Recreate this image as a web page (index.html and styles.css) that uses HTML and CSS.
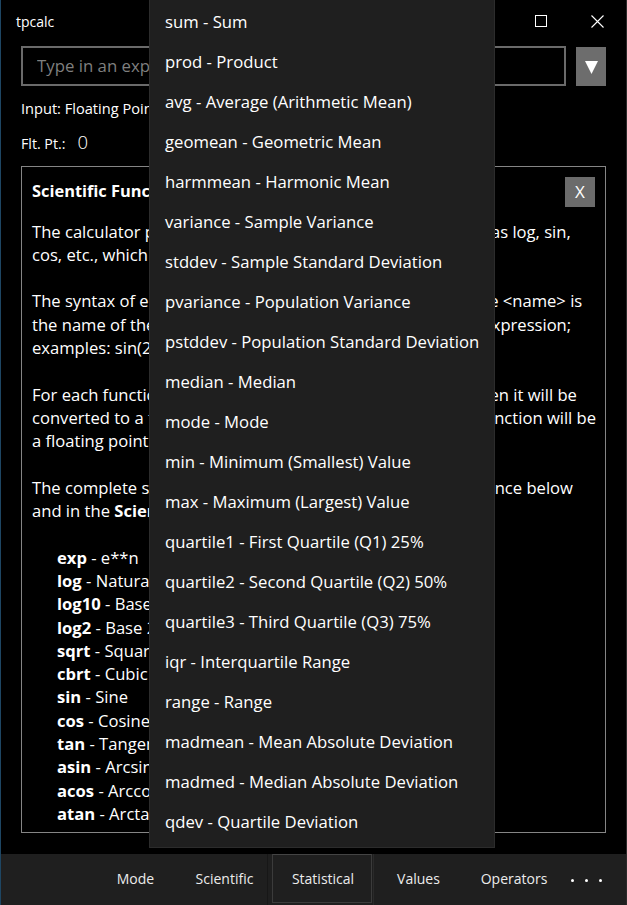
FILE: index.html
```html
<!DOCTYPE html>
<html lang="en">
<head>
<meta charset="utf-8">
<title>tpcalc</title>
<link rel="stylesheet" href="styles.css">
</head>
<body>
<div class="window">
  <header class="titlebar">
    <span class="app-title">tpcalc</span>
    <div class="caption">
      <button class="cap-btn" aria-label="Minimize">
        <svg width="11" height="11" viewBox="0 0 11 11"><line x1="0" y1="5.5" x2="11" y2="5.5" stroke="#fff" stroke-width="1"/></svg>
      </button>
      <button class="cap-btn" aria-label="Maximize">
        <svg width="12" height="12" viewBox="0 0 12 12"><rect x="0.5" y="0.5" width="11" height="11" fill="none" stroke="#fff" stroke-width="1"/></svg>
      </button>
      <button class="cap-btn" aria-label="Close">
        <svg width="13" height="13" viewBox="0 0 13 13"><path d="M0.5 0.5 L12.5 12.5 M12.5 0.5 L0.5 12.5" stroke="#fff" stroke-width="1.1" fill="none"/></svg>
      </button>
    </div>
  </header>

  <main class="main">
    <div class="input-row">
      <input class="expr" type="text" placeholder="Type in an expression">
      <button class="drop-btn" aria-label="Show functions">
        <svg width="13" height="13" viewBox="0 0 13 13"><polygon points="0,0 13,0 6.5,13" fill="#fff"/></svg>
      </button>
    </div>

    <div class="mode-line">Input: Floating Point</div>
    <div class="result-row">
      <span class="result-label">Flt. Pt.:</span>
      <span class="result-value">0</span>
    </div>

    <section class="help">
      <button class="help-close">X</button>
      <h2 class="help-title">Scientific Functions</h2>
      <p>The calculator provides a range of scientific functions, such as log, sin,<br>cos, etc., which can be used in expressions.</p>
      <p>The syntax of each function is &lt;name&gt;(&lt;expression&gt;), where &lt;name&gt; is<br>the name of the function and &lt;expression&gt; is any allowed expression;<br>examples: sin(2*pi), log(10), sqrt(2).</p>
      <p>For each function, if the argument supplied is an integer, then it will be<br>converted to a floating point number; the output of every function will be<br>a floating point number.</p>
      <p>The complete set of scientific functions is listed in the reference below<br>and in the <b>Scientific</b> menu.</p>
      <ul class="fn-list">
        <li><b>exp</b> - e**n</li>
        <li><b>log</b> - Natural Logarithm</li>
        <li><b>log10</b> - Base 10 Logarithm</li>
        <li><b>log2</b> - Base 2 Logarithm</li>
        <li><b>sqrt</b> - Square Root</li>
        <li><b>cbrt</b> - Cubic Root</li>
        <li><b>sin</b> - Sine</li>
        <li><b>cos</b> - Cosine</li>
        <li><b>tan</b> - Tangent</li>
        <li><b>asin</b> - Arcsine</li>
        <li><b>acos</b> - Arccosine</li>
        <li><b>atan</b> - Arctangent</li>
      </ul>
    </section>
  </main>

  <nav class="cmdbar">
    <button class="cmd cmd-mode">Mode</button>
    <button class="cmd cmd-sci">Scientific</button>
    <div class="cmd-cell">
      <button class="cmd cmd-stat">Statistical</button>
    </div>
    <button class="cmd cmd-val">Values</button>
    <button class="cmd cmd-ops">Operators</button>
    <button class="cmd cmd-more" aria-label="More">
      <span class="dot"></span><span class="dot"></span><span class="dot"></span>
    </button>
  </nav>

  <div class="menu">
    <div class="menu-item">sum - Sum</div>
    <div class="menu-item">prod - Product</div>
    <div class="menu-item">avg - Average (Arithmetic Mean)</div>
    <div class="menu-item">geomean - Geometric Mean</div>
    <div class="menu-item">harmmean - Harmonic Mean</div>
    <div class="menu-item">variance - Sample Variance</div>
    <div class="menu-item">stddev - Sample Standard Deviation</div>
    <div class="menu-item">pvariance - Population Variance</div>
    <div class="menu-item">pstddev - Population Standard Deviation</div>
    <div class="menu-item">median - Median</div>
    <div class="menu-item">mode - Mode</div>
    <div class="menu-item">min - Minimum (Smallest) Value</div>
    <div class="menu-item">max - Maximum (Largest) Value</div>
    <div class="menu-item">quartile1 - First Quartile (Q1) 25%</div>
    <div class="menu-item">quartile2 - Second Quartile (Q2) 50%</div>
    <div class="menu-item">quartile3 - Third Quartile (Q3) 75%</div>
    <div class="menu-item">iqr - Interquartile Range</div>
    <div class="menu-item">range - Range</div>
    <div class="menu-item">madmean - Mean Absolute Deviation</div>
    <div class="menu-item">madmed - Median Absolute Deviation</div>
    <div class="menu-item">qdev - Quartile Deviation</div>
  </div>
</div>
</body>
</html>
```

FILE: styles.css
```css
* { box-sizing: border-box; }

html, body {
  margin: 0;
  padding: 0;
  background: #000;
}

body {
  width: 627px;
  height: 905px;
  overflow: hidden;
  font-family: "Open Sans", "Noto Sans", "DejaVu Sans", sans-serif;
  color: #fff;
}

button {
  font-family: inherit;
  color: inherit;
  border: 0;
  background: none;
  padding: 0;
  margin: 0;
  cursor: default;
}

.window {
  position: relative;
  height: 905px;
  border-left: 1px solid #1e4663;
  border-right: 1px solid #2b2b2b;
  display: flex;
  flex-direction: column;
  background: #000;
}

/* Title bar */
.titlebar {
  height: 43px;
  display: flex;
  align-items: center;
  justify-content: space-between;
  padding-left: 15px;
}

.app-title {
  font-size: 14px;
  line-height: 19px;
}

.caption {
  display: flex;
  align-self: flex-start;
}

.cap-btn {
  width: 57px;
  height: 42px;
  display: flex;
  align-items: center;
  justify-content: center;
}

/* Main */
.main {
  padding: 3px 20px 0 20px;
  display: flex;
  flex-direction: column;
}

.input-row {
  display: flex;
  gap: 10px;
  align-items: flex-start;
}

.expr {
  width: 545px;
  height: 40px;
  border: 2px solid #6a6a6a;
  background: #000;
  color: #fff;
  font-family: inherit;
  font-size: 16.8px;
  padding: 0 0 1px 14px;
  outline: none;
}

.expr::placeholder {
  color: #7f7f7f;
  opacity: 1;
}

.drop-btn {
  width: 30px;
  height: 39px;
  margin-top: 1px;
  background: #6d6d6d;
  display: flex;
  align-items: center;
  justify-content: center;
  padding-top: 1px;
}

.mode-line {
  margin-top: 12px;
  font-size: 14.6px;
  line-height: 20px;
}

.result-row {
  margin-top: 11px;
  display: flex;
  align-items: baseline;
  height: 22px;
}

.result-label {
  font-size: 14.2px;
}

.result-value {
  font-size: 18.5px;
  font-weight: 300;
  margin-left: 12px;
}

/* Help panel */
.help {
  position: relative;
  margin-top: 15px;
  width: 585px;
  height: 667px;
  border: 1px solid #858585;
  padding: 13px 10px 0 10px;
  overflow: hidden;
  font-size: 16.6px;
  line-height: 23.3px;
}

.help-close {
  position: absolute;
  top: 10px;
  right: 10px;
  width: 30px;
  height: 30px;
  background: #6b6b6b;
  font-size: 17px;
  line-height: 30px;
  text-align: center;
}

.help-title {
  margin: 0 0 17.5px 0;
  font-size: 16.4px;
  line-height: 22px;
  font-weight: 700;
}

.help p {
  margin: 0 0 23.3px 0;
  white-space: nowrap;
}

.help b {
  font-weight: 700;
}

.fn-list {
  list-style: none;
  margin: 0;
  padding: 0 0 0 25px;
}

/* Command bar */
.cmdbar {
  margin-top: auto;
  height: 51px;
  background: #1f1f1f;
  display: flex;
  justify-content: flex-end;
  align-items: stretch;
}

.cmd {
  font-size: 14px;
  color: #ececec;
  display: flex;
  align-items: center;
  justify-content: center;
  padding-bottom: 3px;
}

.cmd-mode { width: 87px; padding-right: 2px; }
.cmd-sci { width: 87px; padding-left: 2px; }

.cmd-cell {
  width: 107px;
  display: flex;
  padding: 0 1px 2px 4px;
  border-left: 1px solid #171717;
  border-right: 1px solid #2a2a2a;
}

.cmd-stat {
  flex: 1;
  border: 1px solid #3b3b3b;
  border-top-color: #444;
  padding-left: 2px;
  padding-bottom: 1px;
}

.cmd-val { width: 87px; padding-left: 2px; }
.cmd-ops { width: 106px; }

.cmd-more {
  width: 59px;
  gap: 11px;
  padding-right: 21px;
  padding-top: 1px;
  padding-bottom: 0;
}

.dot {
  width: 3px;
  height: 3px;
  background: #fff;
  border-radius: 50%;
}

/* Flyout menu */
.menu {
  position: absolute;
  left: 148px;
  top: 0;
  width: 346px;
  height: 848px;
  background: #1f1f1f;
  border: 1px solid #2c2c2c;
  border-top: 0;
  padding: 1px 0 6px 0;
}

.menu-item {
  height: 40px;
  padding-left: 15px;
  display: flex;
  align-items: center;
  font-size: 16.7px;
  color: #fff;
  white-space: nowrap;
}
```
